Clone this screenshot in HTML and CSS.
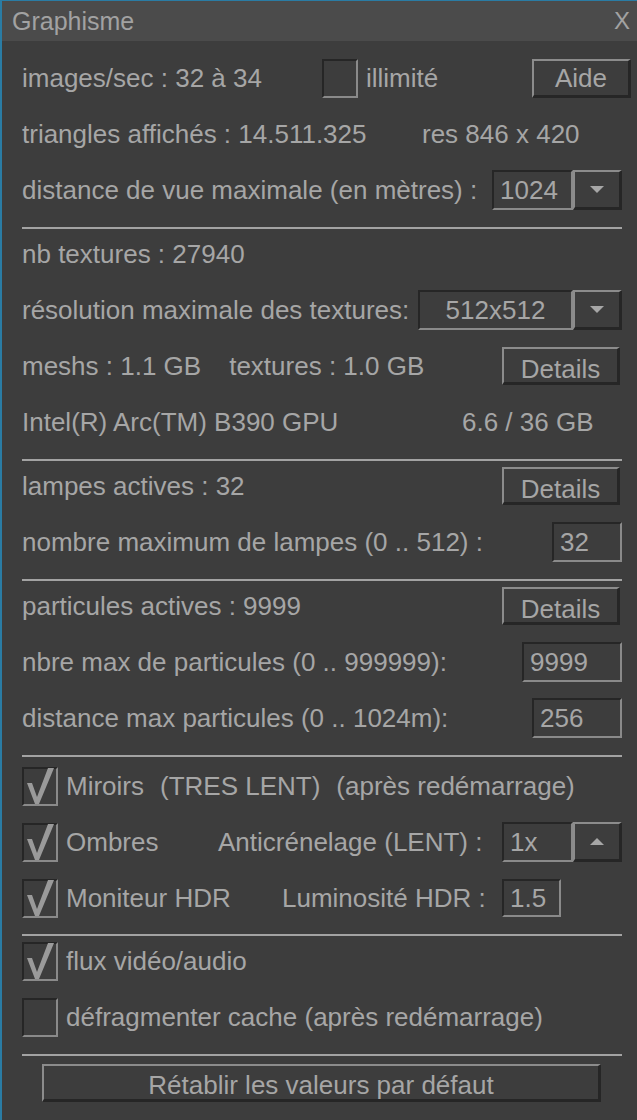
FILE: index.html
```html
<!DOCTYPE html>
<html lang="fr">
<head>
    <meta charset="UTF-8">
    <meta name="viewport" content="width=device-width, initial-scale=1.0">
    <title>Graphisme</title>
    <link rel="stylesheet" href="styles.css">
</head>
<body>
    <div class="window">
        <div class="titlebar">
            <span class="title">Graphisme</span>
            <span class="close">X</span>
        </div>

        <div class="content">
            <section class="group first">
                <div class="row">
                    <span class="col-fps">images/sec : 32 à 34</span>
                    <span class="check"></span>
                    <span class="check-text">illimité</span>
                    <button class="btn aide" type="button">Aide</button>
                </div>
                <div class="row">
                    <span class="col-tri">triangles affichés : 14.511.325</span>
                    <span>res 846 x 420</span>
                </div>
                <div class="row">
                    <span>distance de vue maximale (en mètres) :</span>
                    <div class="combo">
                        <span class="field w-dist">1024</span>
                        <span class="arrow"><span class="tri-down"></span></span>
                    </div>
                </div>
            </section>

            <section class="group">
                <div class="row">
                    <span>nb textures : 27940</span>
                </div>
                <div class="row">
                    <span>résolution maximale des textures:</span>
                    <div class="combo">
                        <span class="field w-res center">512x512</span>
                        <span class="arrow"><span class="tri-down"></span></span>
                    </div>
                </div>
                <div class="row">
                    <span>meshs : 1.1 GB</span>
                    <span class="gap-tex">textures : 1.0 GB</span>
                    <button class="btn details" type="button">Details</button>
                </div>
                <div class="row">
                    <span class="col-gpu">Intel(R) Arc(TM) B390 GPU</span>
                    <span>6.6 / 36 GB</span>
                </div>
            </section>

            <section class="group">
                <div class="row">
                    <span>lampes actives : 32</span>
                    <button class="btn details" type="button">Details</button>
                </div>
                <div class="row">
                    <span>nombre maximum de lampes (0 .. 512) :</span>
                    <span class="field edit w-lamps">32</span>
                </div>
            </section>

            <section class="group">
                <div class="row">
                    <span>particules actives : 9999</span>
                    <button class="btn details" type="button">Details</button>
                </div>
                <div class="row">
                    <span>nbre max de particules (0 .. 999999):</span>
                    <span class="field edit w-part">9999</span>
                </div>
                <div class="row">
                    <span>distance max particules (0 .. 1024m):</span>
                    <span class="field edit w-pdist">256</span>
                </div>
            </section>

            <section class="group checks">
                <div class="row">
                    <span class="check on"></span>
                    <span class="check-text">Miroirs</span>
                    <span class="gap-note">(TRES LENT)</span>
                    <span class="gap-note">(après redémarrage)</span>
                </div>
                <div class="row">
                    <div class="col-ombres">
                        <span class="check on"></span>
                        <span class="check-text">Ombres</span>
                    </div>
                    <span class="col-aa">Anticrénelage (LENT) :</span>
                    <div class="combo">
                        <span class="field w-aa">1x</span>
                        <span class="arrow"><span class="tri-up"></span></span>
                    </div>
                </div>
                <div class="row">
                    <div class="col-hdr">
                        <span class="check on"></span>
                        <span class="check-text">Moniteur HDR</span>
                    </div>
                    <span class="col-lum">Luminosité HDR :</span>
                    <span class="field edit w-lum">1.5</span>
                </div>
            </section>

            <section class="group">
                <div class="row">
                    <span class="check on"></span>
                    <span class="check-text">flux vidéo/audio</span>
                </div>
                <div class="row">
                    <span class="check"></span>
                    <span class="check-text">défragmenter cache (après redémarrage)</span>
                </div>
            </section>

            <section class="group last">
                <button class="btn reset" type="button">Rétablir les valeurs par défaut</button>
            </section>
        </div>
    </div>

    <script>
        // tick mark for the checked boxes
        var tick = '<svg width="36" height="39" viewBox="0 0 36 39">' +
            '<polygon points="5,16 10,16 15,30 26,1 32,1 17,37 13,37" fill="#9a9a9a"/></svg>';
        var boxes = document.querySelectorAll('.check.on');
        for (var i = 0; i < boxes.length; i++) {
            boxes[i].innerHTML = tick;
        }
    </script>
</body>
</html>
```

FILE: styles.css
```css
body {
    margin: 0;
    padding: 0;
    background-color: #3d3d3d;
    font-family: "Liberation Sans", Arial, sans-serif;
    font-size: 26px;
    color: #a6a6a6;
}
.window {
    width: 637px;
    height: 1120px;
    box-sizing: border-box;
    border-left: 2px solid #2a7ca4;
    border-top: 1px solid #2a7ca4;
    background-color: #3d3d3d;
}
.titlebar {
    height: 40px;
    background-color: #4b4b4b;
    display: flex;
    align-items: center;
    justify-content: space-between;
    padding: 0 7px 0 10px;
    font-size: 25px;
    color: #a2a2a2;
}
.close {
    font-size: 24px;
}
.content {
    padding: 0 15px 0 20px;
}
.group {
    display: flex;
    flex-direction: column;
    gap: 16px;
    padding: 5px 0 17px 0;
    border-top: 2px solid #a3a3a3;
}
.group.first {
    border-top: none;
    padding-top: 17px;
}
.group.checks {
    padding-top: 9px;
    padding-bottom: 16px;
}
.group.last {
    padding-top: 8px;
}
.row {
    display: flex;
    align-items: center;
    height: 40px;
    white-space: nowrap;
}

/* fixed columns */
.col-fps { width: 300px; }
.col-tri { width: 400px; }
.col-gpu { width: 440px; }
.col-ombres { width: 196px; display: flex; align-items: center; }
.col-hdr { width: 260px; display: flex; align-items: center; }
.col-aa { width: 284px; }
.col-lum { width: 220px; }
.gap-tex { margin-left: 28px; }
.gap-note { margin-left: 16px; }

/* checkboxes */
.check {
    width: 36px;
    height: 39px;
    box-sizing: border-box;
    border-top: 2px solid #262626;
    border-left: 2px solid #262626;
    border-right: 2px solid #8a8a8a;
    border-bottom: 2px solid #8a8a8a;
    position: relative;
    flex-shrink: 0;
}
.check svg {
    position: absolute;
    left: -2px;
    top: -2px;
}
.check-text {
    margin-left: 8px;
}

/* buttons */
.btn {
    font-family: "Liberation Sans", Arial, sans-serif;
    font-size: 26px;
    color: #a6a6a6;
    background-color: #3d3d3d;
    border-top: 2px solid #8c8c8c;
    border-left: 2px solid #8c8c8c;
    border-right: 3px solid #262626;
    border-bottom: 3px solid #262626;
    box-sizing: border-box;
    padding: 0;
    margin: 0;
}
.aide {
    margin-left: auto;
    margin-right: -9px;
    width: 99px;
    height: 39px;
    padding-top: 2px;
}
.details {
    margin-left: auto;
    margin-right: 2px;
    width: 118px;
    height: 38px;
    padding-top: 5px;
}
.reset {
    margin: 0 21px 0 20px;
    height: 38px;
    padding-top: 4px;
}

/* edit fields and combo boxes */
.field {
    height: 40px;
    box-sizing: border-box;
    border-top: 2px solid #262626;
    border-left: 2px solid #262626;
    border-right: 2px solid #8a8a8a;
    border-bottom: 2px solid #8a8a8a;
    padding-left: 6px;
    display: flex;
    align-items: center;
}
.field.center {
    justify-content: center;
    padding-left: 0;
}
.edit {
    margin-left: auto;
}
.combo {
    margin-left: auto;
    display: flex;
}
.arrow {
    width: 49px;
    height: 40px;
    box-sizing: border-box;
    border-top: 2px solid #8c8c8c;
    border-left: 2px solid #8c8c8c;
    border-right: 3px solid #262626;
    border-bottom: 3px solid #262626;
    display: flex;
    align-items: center;
    justify-content: center;
}
.tri-down {
    width: 0;
    height: 0;
    border-left: 7px solid transparent;
    border-right: 7px solid transparent;
    border-top: 7px solid #a6a6a6;
}
.tri-up {
    width: 0;
    height: 0;
    border-left: 7px solid transparent;
    border-right: 7px solid transparent;
    border-bottom: 7px solid #a6a6a6;
}
.w-dist { width: 81px; }
.w-res { width: 155px; }
.w-aa { width: 71px; }
.w-lamps { width: 70px; }
.w-part { width: 100px; }
.w-pdist { width: 90px; }
.w-lum { width: 59px; margin-left: 0; height: 38px; }
```
